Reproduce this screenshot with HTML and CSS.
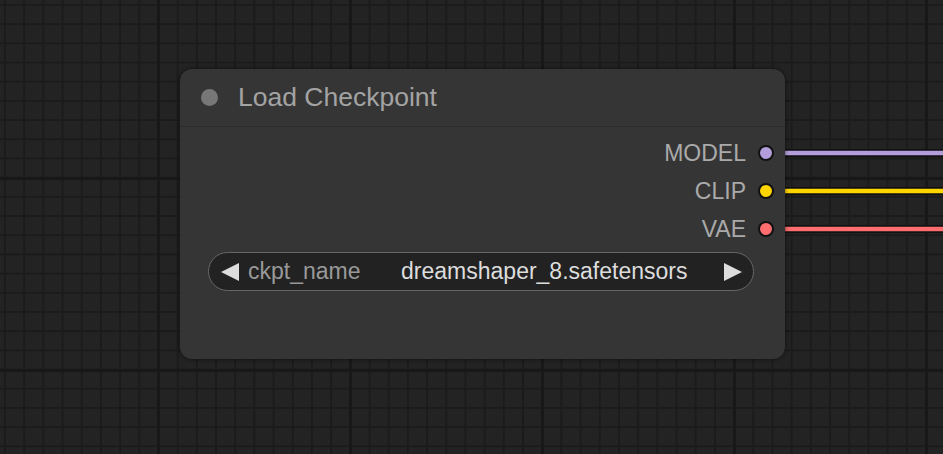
FILE: index.html
```html
<!DOCTYPE html>
<html lang="en">
<head>
    <meta charset="UTF-8">
    <meta name="viewport" content="width=device-width, initial-scale=1.0">
    <title>Load Checkpoint</title>
    <link rel="stylesheet" href="styles.css">
</head>
<body>
    <div class="canvas">
        <svg class="links" width="943" height="454">
            <line class="link-back" x1="780" y1="153" x2="943" y2="153"/>
            <line class="link" x1="780" y1="153" x2="943" y2="153" stroke="#b39ddb"/>
            <line class="link-back" x1="780" y1="191" x2="943" y2="191"/>
            <line class="link" x1="780" y1="191" x2="943" y2="191" stroke="#ffd500"/>
            <line class="link-back" x1="780" y1="229" x2="943" y2="229"/>
            <line class="link" x1="780" y1="229" x2="943" y2="229" stroke="#ff6e6e"/>
        </svg>

        <div class="node">
            <div class="node-title">
                <span class="title-dot"></span>
                <span class="title-text">Load Checkpoint</span>
            </div>
            <div class="node-body">
                <div class="output">
                    <span class="output-name">MODEL</span>
                    <span class="slot model"></span>
                </div>
                <div class="output">
                    <span class="output-name">CLIP</span>
                    <span class="slot clip"></span>
                </div>
                <div class="output">
                    <span class="output-name">VAE</span>
                    <span class="slot vae"></span>
                </div>

                <div class="combo">
                    <svg class="arrow" width="18" height="18" viewBox="0 0 18 18">
                        <polygon points="0,9 18,0 18,18" fill="#ddd"/>
                    </svg>
                    <span class="combo-label">ckpt_name</span>
                    <span class="combo-value">dreamshaper_8.safetensors</span>
                    <svg class="arrow" width="18" height="18" viewBox="0 0 18 18">
                        <polygon points="18,9 0,0 0,18" fill="#ddd"/>
                    </svg>
                </div>
            </div>
        </div>
    </div>
</body>
</html>
```

FILE: styles.css
```css
body {
    margin: 0;
    background-color: #222;
    font-family: "Liberation Sans", Arial, sans-serif;
    overflow: hidden;
}
.canvas {
    position: relative;
    width: 943px;
    height: 454px;
    background-color: #232323;
    background-image:
        linear-gradient(90deg, #181818 3px, transparent 3px),
        linear-gradient(#181818 3px, transparent 3px),
        linear-gradient(90deg, #1b1b1b 2px, transparent 2px),
        linear-gradient(#1b1b1b 2px, transparent 2px);
    background-size: 192px 192px, 192px 192px, 19.2px 19.2px, 19.2px 19.2px;
    background-position: 157px 0, 0 177px, 4px 0, 0 4px;
}
.links {
    position: absolute;
    left: 0;
    top: 0;
}
.link-back {
    stroke: #111;
    stroke-width: 8;
}
.link {
    stroke-width: 4.5;
}
.node {
    position: absolute;
    left: 180px;
    top: 69px;
    width: 605px;
    height: 290px;
    background-color: #353535;
    border-radius: 12px;
    box-shadow: 0 0 4px rgba(0, 0, 0, 0.6);
    box-sizing: border-box;
}
.node-title {
    display: flex;
    align-items: center;
    height: 57px;
    padding-left: 21px;
    border-bottom: 1px solid #2b2b2b;
}
.title-dot {
    width: 17px;
    height: 17px;
    border-radius: 50%;
    background-color: #777;
}
.title-text {
    margin-left: 20px;
    font-size: 26.5px;
    color: #a3a3a3;
}
.node-body {
    padding: 7px 11px 0 28px;
}
.output {
    display: flex;
    justify-content: flex-end;
    align-items: center;
    height: 38px;
}
.output-name {
    font-size: 23px;
    color: #aaa;
    margin-right: 12px;
}
.slot {
    flex-shrink: 0;
    box-sizing: border-box;
    width: 16px;
    height: 16px;
    border-radius: 50%;
    border: 2px solid #111;
}
.slot.model { background-color: #b39ddb; }
.slot.clip { background-color: #ffd500; }
.slot.vae { background-color: #ff6e6e; }

.combo {
    display: flex;
    align-items: center;
    height: 37px;
    margin-top: 4px;
    margin-right: 20px;
    padding: 0 11px 0 12px;
    background-color: #222;
    border: 1px solid #666;
    border-radius: 20px;
}
.combo-label {
    margin-left: 9px;
    font-size: 23px;
    color: #999;
}
.combo-value {
    flex: 1;
    text-align: center;
    font-size: 23px;
    color: #ddd;
    padding-left: 4px;
}
```
